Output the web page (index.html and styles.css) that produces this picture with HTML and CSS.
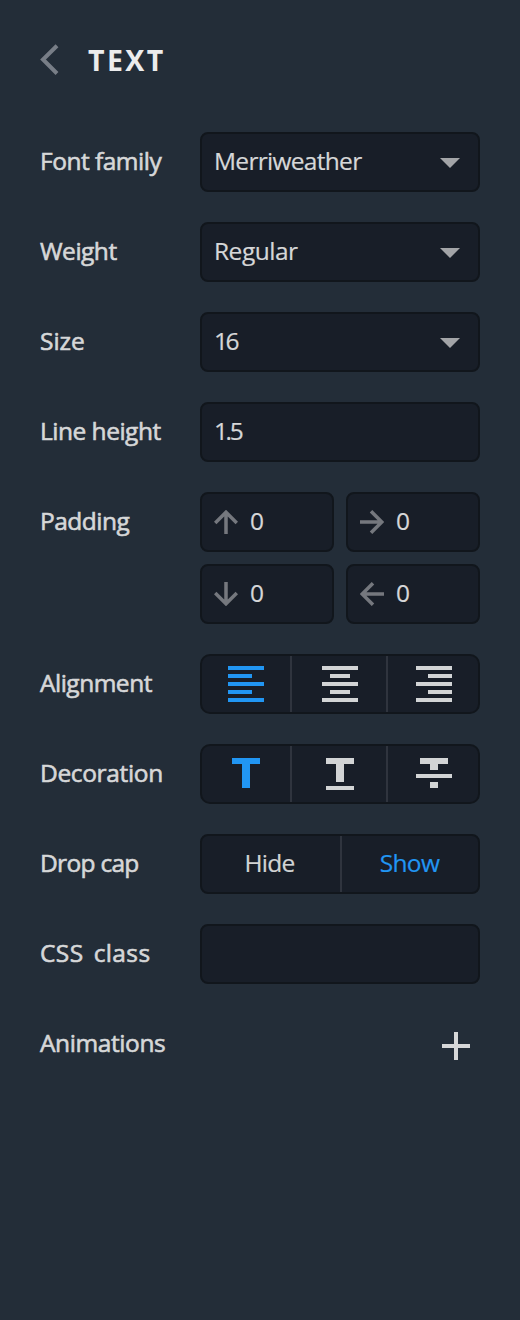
FILE: index.html
```html
<!DOCTYPE html>
<html lang="en">
<head>
<meta charset="utf-8">
<title>Text settings</title>
<link rel="stylesheet" href="styles.css">
</head>
<body>
<main class="panel">
  <header class="header">
    <svg class="back" width="20" height="32" viewBox="0 0 20 32"><path d="M17 1.8 3 15.5 17 29.5"/></svg>
    <h1 class="title">TEXT</h1>
  </header>

  <div class="rows">
    <div class="row">
      <span class="label">Font family</span>
      <div class="field"><span class="value snug">Merriweather</span><svg class="caret" width="20" height="10" viewBox="0 0 20 10"><path d="M0 0H20L10 10Z"/></svg></div>
    </div>
    <div class="row">
      <span class="label">Weight</span>
      <div class="field"><span class="value">Regular</span><svg class="caret" width="20" height="10" viewBox="0 0 20 10"><path d="M0 0H20L10 10Z"/></svg></div>
    </div>
    <div class="row">
      <span class="label open">Size</span>
      <div class="field"><span class="value number">16</span><svg class="caret" width="20" height="10" viewBox="0 0 20 10"><path d="M0 0H20L10 10Z"/></svg></div>
    </div>
    <div class="row">
      <span class="label">Line height</span>
      <div class="field"><span class="value number">1.5</span></div>
    </div>
    <div class="row">
      <span class="label">Padding</span>
      <div class="sides">
        <div class="field side"><svg class="arrow" width="24" height="24" viewBox="0 0 24 24"><path d="M12 24V2M1.2 13 12 2.2 22.8 13"/></svg><span class="value">0</span></div>
        <div class="field side"><svg class="arrow" width="24" height="24" viewBox="0 0 24 24"><path d="M0 12H22M11 1.2 21.8 12 11 22.8"/></svg><span class="value">0</span></div>
        <div class="field side"><svg class="arrow" width="24" height="24" viewBox="0 0 24 24"><path d="M12 0V22M1.2 11 12 21.8 22.8 11"/></svg><span class="value">0</span></div>
        <div class="field side"><svg class="arrow" width="24" height="24" viewBox="0 0 24 24"><path d="M24 12H2M13 1.2 2.2 12 13 22.8"/></svg><span class="value">0</span></div>
      </div>
    </div>
    <div class="row">
      <span class="label">Alignment</span>
      <div class="segments three">
        <div class="segment active"><svg class="icon" width="36" height="36" viewBox="0 0 36 36"><path d="M0 0H36V4H0ZM0 8H24V12H0ZM0 16H36V20H0ZM0 24H24V28H0ZM0 32H36V36H0Z"/></svg></div>
        <div class="segment"><svg class="icon" width="36" height="36" viewBox="0 0 36 36"><path d="M0 0H36V4H0ZM8 8H28V12H8ZM0 16H36V20H0ZM8 24H28V28H8ZM0 32H36V36H0Z"/></svg></div>
        <div class="segment"><svg class="icon" width="36" height="36" viewBox="0 0 36 36"><path d="M0 0H36V4H0ZM12 8H36V12H12ZM0 16H36V20H0ZM12 24H36V28H12ZM0 32H36V36H0Z"/></svg></div>
      </div>
    </div>
    <div class="row">
      <span class="label decoration">Decoration</span>
      <div class="segments three">
        <div class="segment active"><svg class="icon" width="36" height="36" viewBox="0 0 36 36"><path d="M4 2H32V8H22V32H14V8H4Z"/></svg></div>
        <div class="segment"><svg class="icon" width="36" height="36" viewBox="0 0 36 36"><path d="M4 2H32V8H22V26H14V8H4ZM4 30H32V34H4Z"/></svg></div>
        <div class="segment"><svg class="icon" width="36" height="36" viewBox="0 0 36 36"><path d="M4 2H32V8H22V14H14V8H4ZM0 18H36V22H0ZM14 26H22V32H14Z"/></svg></div>
      </div>
    </div>
    <div class="row">
      <span class="label drop">Drop cap</span>
      <div class="segments two">
        <div class="segment word">Hide</div>
        <div class="segment word active">Show</div>
      </div>
    </div>
    <div class="row">
      <span class="label css">CSS&nbsp; class</span>
      <div class="field"></div>
    </div>
    <div class="row">
      <span class="label animations">Animations</span>
      <svg class="plus" width="28" height="28" viewBox="0 0 28 28"><path d="M12 0H16V12H28V16H16V28H12V16H0V12H12Z"/></svg>
    </div>
  </div>
</main>
</body>
</html>
```
FILE: styles.css
```css
* { box-sizing: border-box; }

body {
  margin: 0;
  background: #232d38;
  color: #d6d7d8;
  font: 24.5px "Open Sans", sans-serif;
}

.panel {
  min-height: 1320px;
  padding: 43px 40px 0;
}

.header {
  display: flex;
  height: 89px;
}

.back {
  margin-top: 1px;
  fill: none;
  stroke: #787e87;
  stroke-width: 4;
}

.title {
  margin: 0 0 0 28px;
  color: #ececed;
  font-size: 28.5px;
  font-weight: 700;
  line-height: 34px;
  letter-spacing: 2.4px;
}

.rows {
  display: flex;
  flex-direction: column;
  gap: 30px;
}

.row {
  display: grid;
  grid-template-columns: 160px 280px;
  min-height: 60px;
}

.label {
  line-height: 57px;
  letter-spacing: -0.5px;
  white-space: nowrap;
  -webkit-text-stroke: 0.6px currentColor;
}

.label.open { letter-spacing: 0; }
.label.decoration { letter-spacing: -0.35px; }
.label.drop { letter-spacing: -0.7px; }
.label.css { letter-spacing: 0.4px; word-spacing: -1.7px; }
.label.animations { letter-spacing: -0.4px; }

.field {
  display: flex;
  justify-content: space-between;
  height: 60px;
  padding: 0 18px 0 12px;
  border: 2px solid #11161c;
  border-radius: 8px;
  background: #181e28;
}

.value {
  line-height: 53px;
  letter-spacing: -0.5px;
  -webkit-text-stroke: 0.2px currentColor;
}

.value.snug { letter-spacing: -0.7px; }
.value.number { letter-spacing: -2.4px; }

.caret {
  margin-top: 24px;
  fill: #a3a5a8;
}

.sides {
  display: grid;
  grid-template-columns: 134px 134px;
  gap: 12px;
}

.field.side {
  justify-content: flex-start;
  gap: 12px;
  padding-left: 12px;
}

.arrow {
  margin-top: 16px;
  fill: none;
  stroke: #75787e;
  stroke-width: 3.5;
}

.segments {
  display: grid;
  height: 60px;
  border: 2px solid #11161c;
  border-radius: 10px;
  background: #181e28;
}

.three { grid-template-columns: 88px 96px 92px; }
.two { grid-template-columns: 138px 138px; border-radius: 8px; }

.segment {
  display: flex;
  justify-content: center;
  color: #d2d4d5;
}

.segment + .segment { border-left: 2px solid #2f343e; }
.three .segment + .segment { padding-left: 2px; }

.word {
  padding-right: 3px;
  line-height: 53px;
  letter-spacing: -0.7px;
  -webkit-text-stroke: 0.2px currentColor;
}

.word.active { padding-right: 1px; }

.active { color: #2196f3; }

.icon {
  margin-top: 10px;
  fill: currentColor;
}

.plus {
  justify-self: end;
  margin: 18px 10px 0 0;
  fill: #d6d7d8;
}
```
